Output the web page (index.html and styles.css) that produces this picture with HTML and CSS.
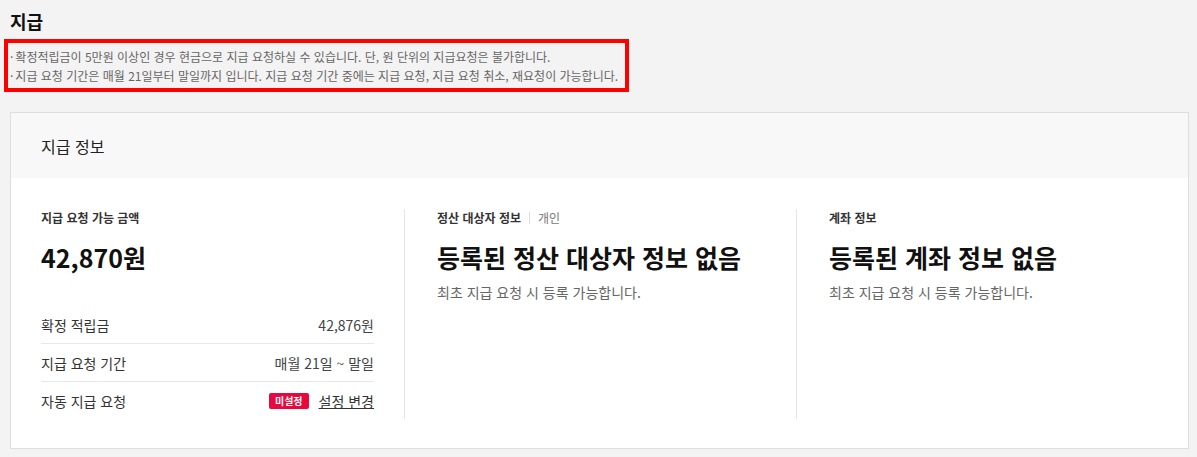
FILE: index.html
```html
<!DOCTYPE html>
<html lang="ko">
<head>
    <meta charset="UTF-8">
    <meta name="viewport" content="width=device-width, initial-scale=1.0">
    <title>지급</title>
    <link rel="stylesheet" href="styles.css">
</head>
<body>
    <div class="page">
        <h1 class="page-title">지급</h1>
        <div class="notice">
            <p>확정적립금이 5만원 이상인 경우 현금으로 지급 요청하실 수 있습니다. 단, 원 단위의 지급요청은 불가합니다.</p>
            <p>지급 요청 기간은 매월 21일부터 말일까지 입니다. 지급 요청 기간 중에는 지급 요청, 지급 요청 취소, 재요청이 가능합니다.</p>
        </div>

        <div class="card">
            <div class="card-header">지급 정보</div>
            <div class="card-body">
                <div class="col col-amount">
                    <div class="col-label">지급 요청 가능 금액</div>
                    <div class="amount">42,870원</div>
                    <ul class="rows">
                        <li>
                            <span>확정 적립금</span>
                            <span class="value">42,876원</span>
                        </li>
                        <li>
                            <span>지급 요청 기간</span>
                            <span class="value">매월 21일 ~ 말일</span>
                        </li>
                        <li>
                            <span>자동 지급 요청</span>
                            <span class="value">
                                <span class="badge">미설정</span>
                                <a href="#" class="link">설정 변경</a>
                            </span>
                        </li>
                    </ul>
                </div>
                <div class="col col-payee">
                    <div class="col-label">정산 대상자 정보<span class="sep"></span><span class="sub-label">개인</span></div>
                    <div class="empty-title">등록된 정산 대상자 정보 없음</div>
                    <p class="empty-desc">최초 지급 요청 시 등록 가능합니다.</p>
                </div>
                <div class="col col-account">
                    <div class="col-label">계좌 정보</div>
                    <div class="empty-title">등록된 계좌 정보 없음</div>
                    <p class="empty-desc">최초 지급 요청 시 등록 가능합니다.</p>
                </div>
            </div>
        </div>
    </div>
</body>
</html>
```

FILE: styles.css
```css
body {
    margin: 0;
    padding: 0;
    background-color: #f3f3f3;
    font-family: "Noto Sans CJK KR", "Noto Sans", sans-serif;
    font-feature-settings: "palt";
    color: #222;
}

.page {
    padding: 8px 8px 0 10px;
}

.page-title {
    margin: 0;
    font-size: 18px;
    line-height: 26px;
    font-weight: 700;
    color: #111;
}

.notice {
    display: inline-block;
    width: 615px;
    margin: 5px 0 0 -6px;
    padding: 4px 0 3px 2px;
    border: 4px solid #ff0000;
}

.notice p {
    margin: 0;
    font-size: 12px;
    line-height: 19px;
    color: #666;
    white-space: nowrap;
}

.notice p::before {
    content: "·";
    margin-right: 2px;
}

.card {
    margin-top: 20px;
    background-color: #fff;
    border: 1px solid #dedede;
}

.card-header {
    height: 65px;
    padding-left: 30px;
    display: flex;
    align-items: center;
    background-color: #f8f8f8;
    font-size: 16px;
    color: #222;
}

.card-body {
    display: flex;
    padding: 31px 30px 29px;
}

.col {
    box-sizing: border-box;
}

.col-amount {
    flex: 0 0 364px;
    padding-right: 30px;
    border-right: 1px solid #e6e6e6;
}

.col-payee {
    flex: 0 0 392px;
    padding: 0 32px;
    border-right: 1px solid #e6e6e6;
}

.col-account {
    flex: 1;
    padding-left: 32px;
}

.col-label {
    display: flex;
    align-items: center;
    font-size: 12px;
    line-height: 18px;
    font-weight: 700;
    color: #333;
}

.sep {
    width: 1px;
    height: 12px;
    margin: 0 8px;
    background-color: #ddd;
}

.sub-label {
    font-weight: 400;
    color: #777;
}

.amount {
    margin-top: 12px;
    font-size: 25px;
    line-height: 36px;
    font-weight: 700;
    color: #111;
}

.rows {
    list-style: none;
    margin: 31px 0 0;
    padding: 0;
}

.rows li {
    display: flex;
    justify-content: space-between;
    align-items: center;
    height: 37px;
    font-size: 14px;
    color: #333;
    border-bottom: 1px solid #e8e8e8;
}

.rows li:last-child {
    border-bottom: none;
}

.value {
    display: flex;
    align-items: center;
    color: #444;
}

.badge {
    display: inline-block;
    height: 16px;
    padding: 0 6px;
    margin-right: 10px;
    border-radius: 2px;
    background-color: #e8083e;
    color: #fff;
    font-size: 10px;
    line-height: 16px;
    font-weight: 700;
}

.link {
    color: #333;
    text-decoration: underline;
}

.empty-title {
    margin-top: 12px;
    font-size: 25px;
    line-height: 36px;
    font-weight: 700;
    color: #111;
}

.empty-desc {
    margin: 7px 0 0;
    font-size: 14px;
    line-height: 20px;
    color: #666;
}
```
